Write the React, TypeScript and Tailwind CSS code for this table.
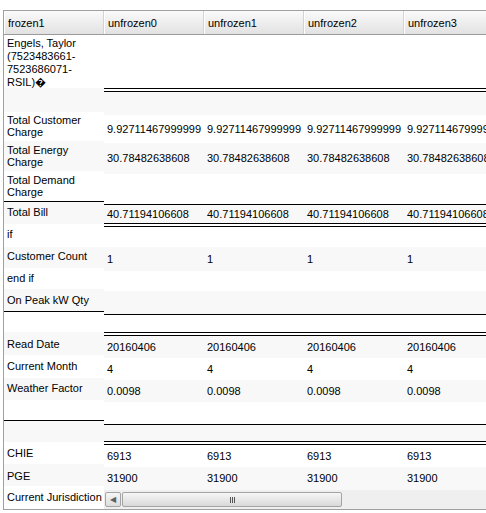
import React from 'react';

type FrozenRow = { label?: string; cls: string };
type GridRow = 'dbl' | 'line' | { cls: string; value?: string };

const columns = ['unfrozen0', 'unfrozen1', 'unfrozen2', 'unfrozen3'];

const frozenRows: FrozenRow[] = [
    { label: 'Engels, Taylor (7523483661-7523686071-RSIL)\uFFFD', cls: 'h-[53px] pt-[2px] leading-[13px]' },
    { cls: 'h-[24px] bg-[#f8f8f8]' },
    { label: 'Total Customer Charge', cls: 'h-[29px] pt-[2px]' },
    { label: 'Total Energy Charge', cls: 'h-[30px] pt-[3px] bg-[#f8f8f8]' },
    { label: 'Total Demand Charge', cls: 'h-[31px] pt-[3px] border-b border-black' },
    { label: 'Total Bill', cls: 'h-[22px] pt-[4px] bg-[#f8f8f8]' },
    { label: 'if', cls: 'h-[23px] pt-[4px]' },
    { label: 'Customer Count', cls: 'h-[21px] pt-[3px] bg-[#f8f8f8]' },
    { label: 'end if', cls: 'h-[21px] pt-[4px]' },
    { label: 'On Peak kW Qty', cls: 'h-[23px] pt-[5px] bg-[#f8f8f8] border-b border-black' },
    { cls: 'h-[20px]' },
    { label: 'Read Date', cls: 'h-[23px] pt-[6px] bg-[#f8f8f8]' },
    { label: 'Current Month', cls: 'h-[23px] pt-[5px]' },
    { label: 'Weather Factor', cls: 'h-[22px] pt-[4px] bg-[#f8f8f8]' },
    { cls: 'h-[21px] border-b border-black' },
    { cls: 'h-[21px] bg-[#f8f8f8]' },
    { label: 'CHIE', cls: 'h-[22px] pt-[5px]' },
    { label: 'PGE', cls: 'h-[22px] pt-[6px] bg-[#f8f8f8]' },
    { label: 'Current Jurisdiction', cls: 'h-[23px] pt-[5px] whitespace-nowrap' },
];

const gridRows: GridRow[] = [
    { cls: 'h-[53px]' },
    'dbl',
    { cls: 'h-[23px] bg-[#f8f8f8]' },
    { cls: 'h-[28px]', value: '9.92711467999999' },
    { cls: 'h-[31px] bg-[#f8f8f8]', value: '30.78482638608' },
    { cls: 'h-[30px]' },
    'line',
    { cls: 'h-[18px] bg-[#f8f8f8]', value: '40.71194106608' },
    'dbl',
    { cls: 'h-[20px]' },
    { cls: 'h-[24px] bg-[#f8f8f8]', value: '1' },
    { cls: 'h-[20px]' },
    { cls: 'h-[23px] bg-[#f8f8f8]' },
    'line',
    { cls: 'h-[17px]' },
    'dbl',
    { cls: 'h-[22px] bg-[#f8f8f8]', value: '20160406' },
    { cls: 'h-[22px]', value: '4' },
    { cls: 'h-[22px] bg-[#f8f8f8]', value: '0.0098' },
    { cls: 'h-[22px]' },
    'line',
    { cls: 'h-[16px] bg-[#f8f8f8]' },
    'dbl',
    { cls: 'h-[22px]', value: '6913' },
    { cls: 'h-[23px] bg-[#f8f8f8]', value: '31900' },
];

function HeaderCell({ label }: { label: string }) {
    return (
        <div className="flex w-[100px] shrink-0 items-center pl-[4px] pt-[1px] shadow-[inset_1px_0_#ffffff,inset_-1px_0_#d2d2d2]">
            {label}
        </div>
    );
}

function Scrollbar() {
    return (
        <div className="flex h-[19px] items-center bg-[#efefef] pl-[1px]">
            <div className="flex h-[15px] w-[16px] items-center justify-center rounded-[2px] border border-[#a4a4a4] bg-linear-to-b from-[#f6f6f6] to-[#dddddd] text-[8px] text-[#606060]">
                ◀
            </div>
            <div className="ml-[1px] flex h-[15px] w-[220px] items-center justify-center rounded-[2px] border border-[#a4a4a4] bg-linear-to-b from-[#f6f6f6] to-[#d9d9d9]">
                <div className="flex gap-[1px]">
                    <span className="h-[6px] w-[1px] bg-[#555]" />
                    <span className="h-[6px] w-[1px] bg-[#555]" />
                    <span className="h-[6px] w-[1px] bg-[#555]" />
                </div>
            </div>
        </div>
    );
}

export default function App() {
    return (
        <div className="h-[513px] w-[486px] overflow-hidden bg-white pt-[10px] font-['Liberation_Sans',Arial,sans-serif] text-[11px] text-black">
            <div className="ml-[3px] w-[560px] border-y border-l border-[#a0a0a0]">
                <div className="flex h-[24px] border-b border-[#9a9a9a] bg-linear-to-b from-[#fafafa] to-[#e2e2e2]">
                    <HeaderCell label="frozen1" />
                    {columns.map((c) => (
                        <HeaderCell key={c} label={c} />
                    ))}
                </div>
                <div className="flex">
                    <div className="flex w-[100px] shrink-0 flex-col">
                        {frozenRows.map((row, i) => (
                            <div
                                key={i}
                                className={`box-border overflow-hidden pl-[3px] pr-[4px] leading-[12px] ${row.cls}`}
                            >
                                {row.label}
                            </div>
                        ))}
                    </div>
                    <div className="flex min-w-0 flex-1 flex-col">
                        {gridRows.map((row, i) => {
                            if (row === 'dbl') {
                                return <div key={i} className="box-border h-[4px] border-y border-black" />;
                            }
                            if (row === 'line') {
                                return <div key={i} className="h-[1px] bg-black" />;
                            }
                            return (
                                <div key={i} className={`box-border flex items-center ${row.cls}`}>
                                    {row.value &&
                                        columns.map((c) => (
                                            <div
                                                key={c}
                                                className="w-[100px] shrink-0 overflow-hidden whitespace-nowrap pl-[3px]"
                                            >
                                                {row.value}
                                            </div>
                                        ))}
                                </div>
                            );
                        })}
                        <Scrollbar />
                    </div>
                </div>
            </div>
        </div>
    );
}
